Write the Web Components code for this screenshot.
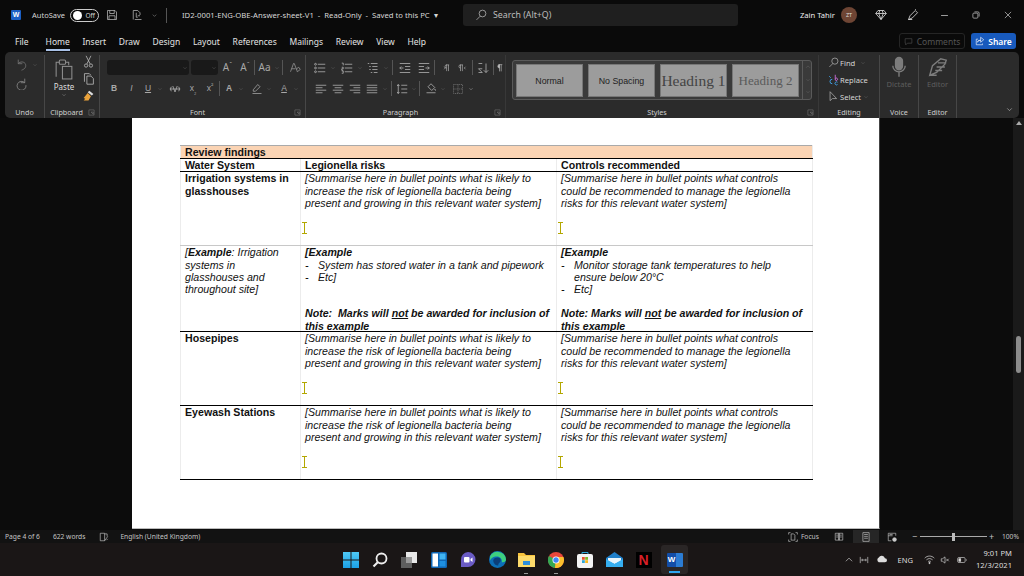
<!DOCTYPE html>
<html lang="en">
<head>
<meta charset="utf-8">
<title>Word</title>
<style>
  html, body { margin: 0; height: 576px; overflow: hidden; background: #0a0a0a; }
  body { display: flex; flex-direction: column; font-family: "Noto Sans", "Open Sans", sans-serif; color: #ddd; }
</style>
</head>
<body>
<word-titlebar></word-titlebar>
<word-tabs></word-tabs>
<word-ribbon></word-ribbon>
<word-document></word-document>
<word-status></word-status>
<win-taskbar></win-taskbar>

<script>
const ICONS = {
  undo: '<path d="M4 2v5h5M4 7c2-3 8-3 9 1s-2 6-5 7"/>',
  redo: '<path d="M12 2v5H7M12 7a5.5 5.5 0 1 0 1.5 3"/>',
  paste: '<path d="M3 18V4h3M12 4h3v3"/><rect x="6" y="2" width="6" height="4" rx="1"/><rect x="9" y="8" width="9" height="12"/>',
  cut: '<circle cx="5" cy="13" r="2"/><circle cx="11" cy="13" r="2"/><path d="M6 11 11 1M10 11 5 1"/>',
  copy: '<path d="M3 12V2h6l2 2"/><path d="M6 5h5l3 3v7H6z"/>',
  painter: '<path d="M9 2l5 4-2 2-5-4z" fill="#ddd" stroke="none"/><path d="M7 5l4 4-3 5-6 0 2-2-2-1z" fill="#e9a23b" stroke="none"/>',
  launcher: '<path d="M2 2h12v12H2zM7 7h5v5M7 7l5 5" stroke-width="1"/>',
  chev: '<path d="M4 6l4 4 4-4"/>',
  bullets: '<circle cx="2" cy="3" r="1.2"/><circle cx="2" cy="8" r="1.2"/><circle cx="2" cy="13" r="1.2"/><path d="M5 3h10M5 8h10M5 13h10"/>',
  numbers: '<path d="M1 1.5h2v3M1 7h2v2H1v2h2M1 12h2v3H1M5 3h10M5 8h10M5 13h10"/>',
  multi: '<path d="M1 2h2M5 2h9M3 6h2M7 6h7M3 10h2M7 10h7M5 14h2M9 14h5"/>',
  indentl: '<path d="M1 2h14M8 6h7M8 10h7M1 14h14M6 8H1M3 6 1 8l2 2"/>',
  indentr: '<path d="M1 2h14M1 6h7M1 10h7M1 14h14M10 8h5M13 6l2 2-2 2"/>',
  ltr: '<path d="M9 3v10M12 3v10M8 3h5M9 3a2.500 2.500 0 0 0 0 5M5 6l2 2-2 2" fill="none"/>',
  rtl: '<path d="M4 3v10M7 3v10M3 3h5M4 3a2.500 2.500 0 0 0 0 5M12 6l-2 2 2 2"/>',
  sort: '<path d="M12 2v12M9 11l3 3 3-3M2 2h5M2 14h5l-5-5h5" stroke-width="1"/>',
  pilcrow: '<path d="M8 2v12M11 2v12M6 2h7M8 2a3 3 0 0 0 0 6z" fill="currentColor" stroke-width="1.2"/>',
  left: '<path d="M1 3h14M1 6.300h9M1 9.600h14M1 13h9"/>',
  center: '<path d="M1 3h14M3.500 6.300h9M1 9.600h14M3.500 13h9"/>',
  right: '<path d="M1 3h14M6 6.300h9M1 9.600h14M6 13h9"/>',
  justify: '<path d="M1 3h14M1 6.300h14M1 9.600h14M1 13h14"/>',
  spacing: '<path d="M7 3h8M7 8h8M7 13h8M3 2v12M1.500 4 3 2l1.500 2M1.500 12 3 14l1.500-2"/>',
  shade: '<path d="M8 1l5 5-4 4-5-5zM2 13h12" /><path d="M13 8l1 2" stroke="#ddd"/>',
  borders: '<path d="M2 2h12v12H2zM8 2v12M2 8h12" stroke-dasharray="1.500 1"/>',
  clear: '<path d="M2 13 6 2h1l3 8M3.500 9h5"/><path d="M10 9l3-2 2 3-4 3z"/>',
  strike: '<path d="M1 8h14M5 4l3 8 3-8M3 5l-1 3 1 3M13 5l1 3-1 3" stroke-width="1"/>',
  search: '<circle cx="10" cy="6" r="4.500"/><path d="M7 9.500 2 14.500"/>',
  replace: '<path d="M7 7a3 3 0 1 0 0 6" stroke="#3fa8f4"/><path d="M3 3l2 2" stroke="#3fa8f4"/><path d="M11 1v7M11 6a1.700 1.700 0 1 1 0 2" stroke="#c86dd7"/><path d="M14 11a2 2 0 1 0 0 3" stroke="#3fa8f4"/>',
  select: '<path d="M3 1v13l3.500-3h6z"/>',
  mic: '<rect x="5.500" y="1" width="5" height="9" rx="2.500" fill="currentColor"/><path d="M3.500 7a4.500 4.500 0 0 0 9 0M8 11.500V15"/>',
  editor: '<path d="M2 14 4 7l6-5 4 1-1 3-6 6zM2 14h5M8 5h6M7 8h6M6 10.500h5"/>',
  diamond: '<path d="M4 2h8l3 4-7 8-7-8zM1 6h14M5 6l3 8 3-8M5 6l1.500-4M11 6 9.500 2"/>',
  pen: '<path d="M2 14l2-5 7-7 3 3-7 7zM2 14h5M11 1l1-1"/>',
  highlight: '<path d="M3 9l6-7 3 3-6 6H3zM2 14h12" />',
  min: '<path d="M3 8h10"/>',
  max: '<rect x="3" y="5" width="8" height="8" rx="1.500"/><path d="M5.500 3H11a2 2 0 0 1 2 2v5.500"/>',
  close: '<path d="M3 3l10 10M13 3 3 13"/>',
  save: '<path d="M2 2h10l2 2v10H2zM5 2v4h6V2M4 14V9h8v5"/>',
  touch: '<path d="M3 14V2h6l3 3v3M5 14h9M7 11h2M7 5v6M9 9h3"/>',
  comment: '<path d="M2 3h12v8H6l-3 3v-3H2z"/>',
  shareup: '<path d="M9 7V2l5 4-5 4V7c-3 0-4 1-5 3 0-3 2-3 5-3zM12 12v2H2V5h3"/>',
  proof: '<path d="M2 2h7v12H2zM9 3h4v4M9 14l5-7M12 13l2-2" />',
  focus: '<path d="M1 4V1h3M12 1h3v3M1 12v3h3M15 12v3h-3M5 3h4l2 2v8H5z"/>',
  read: '<path d="M8 3v10M2 2h6v11H2zM8 2h6v11H8zM3.500 5h3M3.500 8h3M9.500 5h3M9.500 8h3" stroke-width="1"/>',
  print: '<path d="M3 1h10v14H3zM5 4h6M5 7h6M5 10h6"/>',
  web: '<path d="M2 2h12v4M2 2v12h5M2 6h7M4 4h5"/><circle cx="12" cy="12" r="3" fill="currentColor"/>',
  up: '<path d="M3 10l5-5 5 5"/>',
  meet: '<path d="M2 3v10M14 3v10M4 8h8M5 6v4M11 6v4"/>',
  cloud: '<path d="M4 12h9a3 3 0 0 0 0-6 5 5 0 0 0-9-1 4 4 0 0 0 0 7z" fill="currentColor" stroke="none"/>',
  wifi: '<path d="M1 6c4-4 10-4 14 0M3.500 8.500c3-2.500 6-2.500 9 0M6 11c1.500-1 2.500-1 4 0"/><circle cx="8" cy="13" r="1" fill="currentColor"/>',
  mute: '<path d="M2 6h2l4-3v10L4 10H2zM10 6l4 4M14 6l-4 4"/>',
  battery: '<rect x="1" y="4" width="12" height="8" rx="2"/><rect x="3" y="6" width="3" height="4" fill="currentColor"/><path d="M15 7v2"/>'
};

// draws one named stroke icon, centred in a box of width w
class RbIcon extends HTMLElement {
  connectedCallback () {
    const s = this.getAttribute('s') || 12;
    const w = this.getAttribute('w') || s;
    const vb = this.getAttribute('vb') || 16;
    const sw = this.getAttribute('sw') || 1;
    const col = this.getAttribute('c') || '#b9b9b9';
    this.attachShadow({ mode: 'open' }).innerHTML = `
      <style>
        :host { display: flex; align-items: center; justify-content: center; flex: none; width: ${w}px; color: ${col}; }
        svg { display: block; fill: none; stroke: currentColor; }
      </style>
      <svg width="${s}" height="${s}" viewBox="0 0 ${vb} ${vb}" stroke-width="${sw}">${ICONS[this.getAttribute('name')]}</svg>`;
  }
}
customElements.define('rb-icon', RbIcon);

const ic = (name, w, s, extra = '') => `<rb-icon name="${name}" w="${w}" s="${s}" ${extra}></rb-icon>`;
const dn = (w = 8) => ic('chev', w, 6, 'c="#777"');

class WordTitlebar extends HTMLElement {
  connectedCallback () {
    this.attachShadow({ mode: 'open' }).innerHTML = `
      <style>
        :host { display: flex; align-items: center; flex: none; height: 30px; padding-left: 11px; font-size: 7.7px; color: #d6d6d6; position: relative; }
        .logo { flex: none; width: 10px; height: 10px; background: #1b5fc4; border-radius: 1px; color: #fff; font: bold 7px/10px "Liberation Sans", sans-serif; text-align: center; }
        .auto { flex: none; width: 33px; margin-left: 11px; font-size: 7.5px; white-space: nowrap; }
        .toggle { display: flex; align-items: center; justify-content: space-between; flex: none; box-sizing: border-box; width: 29px; height: 13px; margin-left: 5px; padding: 0 3px 0 2px; border: 1px solid #ccc; border-radius: 7px; font-size: 6.5px; }
        .toggle i { width: 9px; height: 9px; border-radius: 50%; background: #fff; }
        .vsep { flex: none; width: 1px; height: 15px; background: #555; margin: 0 15px 0 7px; }
        .title { flex: none; width: 281px; white-space: nowrap; }
        .search { display: flex; align-items: center; gap: 6px; flex: none; box-sizing: border-box; width: 275px; height: 22px; padding-left: 12px; background: #1f1f1f; border-radius: 3px; font-size: 8.8px; color: #bdbdbd; }
        .user { flex: none; width: 41px; margin-left: 62px; font-size: 7.6px; color: #eee; white-space: nowrap; }
        .av { flex: none; width: 16px; height: 16px; border-radius: 50%; background: #6e4534; color: #ddd; font-size: 5.5px; line-height: 16px; text-align: center; margin-right: 16px; }
        .end { display: flex; align-items: center; }
      </style>
      <span class="logo">W</span>
      <span class="auto">AutoSave</span>
      <span class="toggle"><i></i>Off</span>
      ${ic('save', 26, 12)}
      ${ic('touch', 24, 12)}
      ${ic('chev', 10, 7)}
      <span class="vsep"></span>
      <span class="title">ID2-0001-ENG-OBE-Answer-sheet-V1 &nbsp;- &nbsp;Read-Only &nbsp;- &nbsp;Saved to this PC &nbsp;▾</span>
      <span class="search">${ic('search', 12, 12)}Search (Alt+Q)</span>
      <span class="user">Zain Tahir</span>
      <span class="av">ZT</span>
      <span class="end">
        ${ic('diamond', 32, 12, 'c="#eee" style="margin-left:-8px"')}
        ${ic('pen', 32, 12, 'c="#eee"')}
        ${ic('min', 31, 11, 'c="#ddd"')}
        ${ic('max', 32, 10, 'c="#ddd"')}
        ${ic('close', 32, 10, 'c="#ddd"')}
      </span>`;
  }
}
customElements.define('word-titlebar', WordTitlebar);

class WordTabs extends HTMLElement {
  connectedCallback () {
    const names = ['Insert', 'Draw', 'Design', 'Layout', 'References', 'Mailings', 'Review', 'View', 'Help'];
    this.attachShadow({ mode: 'open' }).innerHTML = `
      <style>
        :host { display: flex; align-items: center; flex: none; height: 22px; padding: 0 8px 0 15px; font-size: 8.5px; color: #e4e4e4; }
        span { margin-right: 12.7px; white-space: nowrap; }
        .file { margin-right: 17px; }
        .home { position: relative; }
        .home::after { content: ""; position: absolute; left: 0; right: 0; bottom: -4px; height: 2px; background: #a9c1e6; }
        .side { display: flex; gap: 6px; margin-left: auto; }
        .btn { display: flex; align-items: center; justify-content: center; gap: 3px; box-sizing: border-box; height: 16px; margin: 0; border-radius: 3px; font-size: 8.5px; }
        .comments { width: 66px; border: 1px solid #252525; color: #555; }
        .share { width: 45px; background: #185abd; color: #fff; font-weight: 600; }
      </style>
      <span class="file">File</span>
      <span class="home">Home</span>
      ${names.map(n => `<span>${n}</span>`).join('')}
      <div class="side">
        <div class="btn comments">${ic('comment', 10, 9, 'c="#555"')}Comments</div>
        <div class="btn share">${ic('shareup', 10, 10, 'c="#fff"')}Share</div>
      </div>`;
  }
}
customElements.define('word-tabs', WordTabs);

class WordRibbon extends HTMLElement {
  connectedCallback () {
    const sep = (w = 3) => `<b class="sub" style="width:${w}px"></b>`;
    const sp = w => `<u style="width:${w}px"></u>`;
    const t = (txt, w, cls = '') => `<em class="t ${cls}" style="width:${w}px">${txt}</em>`;
    const launcher = ic('launcher', 10, 7, 'class="lch" c="#8a8a8a"');
    this.attachShadow({ mode: 'open' }).innerHTML = `
      <style>
        :host { display: flex; flex: none; box-sizing: border-box; height: 66px; margin: 0 5px; background: #2b2b2b; border-radius: 5px; font-size: 7.5px; color: #c9c9c9; position: relative; z-index: 1; }
        .g { display: flex; flex-direction: column; flex: none; box-sizing: border-box; height: 63px; margin-top: 3px; border-right: 1px solid #474747; position: relative; }
        .g.soft { border-right-color: #383838; }
        .body { flex: 1; min-height: 0; }
        .lab { flex: none; height: 12px; line-height: 12px; text-align: center; font-size: 7.2px; color: #cfcfcf; }
        .lch { position: absolute; right: 3px; bottom: 2px; }
        .rows { display: flex; flex-direction: column; gap: 6px; padding-top: 5px; }
        .row { display: flex; align-items: center; height: 15px; }
        u { display: block; flex: none; }
        .sub { display: block; flex: none; height: 15px; box-sizing: border-box; border-left: 1px solid #555; margin-left: 1px; }
        .t { display: block; flex: none; font-style: normal; text-align: center; color: #a8a8a8; font-size: 10px; line-height: 15px; white-space: nowrap; }
        .t sup { font-size: 7px; line-height: 0; }
        .t sub { font-size: 6px; line-height: 0; }
        .t.s { font-family: "Liberation Sans", sans-serif; font-size: 8.5px; }
        .t.b { font-weight: bold; }
        .combo { flex: none; box-sizing: border-box; height: 15px; background: #191919; border-radius: 3px; display: flex; align-items: center; justify-content: flex-end; }
        .paste { display: grid; grid-template-columns: 34px 15px; padding-left: 2px; }
        .paste .col1 { display: flex; flex-direction: column; align-items: center; padding-top: 3px; font-size: 8px; color: #ddd; }
        .paste .col2 { display: flex; flex-direction: column; gap: 4px; }
        .gal { display: flex; box-sizing: border-box; width: 300px; height: 40px; margin: 5px 0 0 6px; padding: 3px 0 0 3px; gap: 5px; border: 1px solid #5a5a5a; border-radius: 3px; background: #3a3a3a; }
        .sty { flex: none; box-sizing: border-box; width: 67px; height: 33px; background: #9c9c9c; border: 1px solid #777; color: #222; display: flex; align-items: center; justify-content: center; font: 8.8px "Liberation Sans", sans-serif; white-space: nowrap; }
        .sty.h { font: 15.5px "Liberation Serif", serif; color: #444; }
        .sty.h2 { font: 13px "Liberation Serif", serif; color: #5a5a5a; }
        .spin { display: flex; flex-direction: column; width: 10px; margin: -3px 0 0 -2px; border-left: 1px solid #5a5a5a; }
        .spin rb-icon { height: 12.600px; }
        .edit { display: flex; flex-direction: column; gap: 4px; padding: 1px 0 0 8px; font-size: 7.6px; color: #d6d6d6; }
        .edit div { display: flex; align-items: center; gap: 1px; height: 13px; }
        .big { display: flex; flex-direction: column; align-items: center; padding-top: 1px; font-size: 7.5px; color: #5e5e5e; }
      </style>

      <div class="g" style="width:40px">
        <div class="body rows" style="gap:2px;padding-top:1px">
          <div class="row" style="height:17px">${sp(5)}${ic('undo', 22, 13, 'c="#777"')}${dn(6)}</div>
          <div class="row" style="height:17px">${sp(5)}${ic('redo', 22, 13, 'c="#8a8a8a"')}</div>
        </div>
        <div class="lab">Undo</div>
      </div>

      <div class="g" style="width:55px">
        <div class="body paste">
          <div class="col1">${ic('paste', 34, 22, 'vb="21" c="#8f8f8f"')}<span style="margin-top:1px">Paste</span>${ic('chev', 12, 6)}</div>
          <div class="col2">${ic('cut', 15, 13)}${ic('copy', 15, 13)}${ic('painter', 15, 13)}</div>
        </div>
        <div class="lab" style="padding-right:11px">Clipboard</div>${launcher}
      </div>

      <div class="g" style="width:206px">
        <div class="body rows">
          <div class="row">${sp(7)}
            <div class="combo" style="width:82px">${dn()}</div>${sp(2)}
            <div class="combo" style="width:27px">${dn()}</div>
            ${t('A<sup>ˆ</sup>', 19)}${t('A<sup>ˇ</sup>', 16)}${sep(2)}${t('Aa', 17)}${dn()}${sep(6)}${ic('clear', 14, 12, 'c="#999"')}
          </div>
          <div class="row">${sp(5)}
            ${t('B', 18, 's b')}${t('<i>I</i>', 17, 's')}${t('<span style="text-decoration:underline">U</span>', 16, 's')}${dn()}${sp(2)}
            ${ic('strike', 18, 12)}${t('x<sub>₂</sub>', 18, 's')}${t('x<sup>²</sup>', 16, 's')}${sep(2)}
            ${t('A', 16, 's b')}${dn()}${sp(4)}
            ${ic('highlight', 16, 12, 'c="#aaa"')}${dn()}${sp(3)}
            ${t('<span style="text-decoration:underline">A</span>', 16, 's')}${dn()}
          </div>
        </div>
        <div class="lab" style="padding-right:10px">Font</div>${launcher}
      </div>

      <div class="g soft" style="width:200px">
        <div class="body rows">
          <div class="row">${sp(6)}
            ${ic('bullets', 16, 12)}${dn(10)}${sp(1)}${ic('numbers', 16, 12)}${dn(10)}${ic('multi', 16, 12)}${dn(10)}${sep(3)}
            ${ic('indentl', 20, 12)}${ic('indentr', 18, 12)}${sep(3)}
            ${ic('ltr', 17, 10)}${ic('rtl', 17, 10)}${sep(1)}${ic('sort', 19, 12)}${sep(2)}${ic('pilcrow', 9, 12)}
          </div>
          <div class="row">${sp(6)}
            ${ic('left', 17, 12)}${ic('center', 17, 12)}${ic('right', 17, 12)}${ic('justify', 17, 12)}${dn(10)}${sep(2)}
            ${ic('spacing', 17, 12)}${dn(8)}${sep(4)}${ic('shade', 15, 12)}${dn(10)}${sp(3)}${ic('borders', 14, 12, 'c="#777"')}${ic('chev', 12, 6, 'c="#ddd"')}
          </div>
        </div>
        <div class="lab" style="padding-right:10px">Paragraph</div>${launcher}
      </div>

      <div class="g soft" style="width:313px">
        <div class="body">
          <div class="gal">
            <div class="sty">Normal</div>
            <div class="sty">No Spacing</div>
            <div class="sty h">Heading 1</div>
            <div class="sty h2">Heading 2</div>
            <div class="spin">${ic('up', 9, 6, 'c="#777"')}${ic('chev', 9, 6, 'c="#777"')}${ic('chev', 9, 6, 'c="#777"')}</div>
          </div>
        </div>
        <div class="lab" style="padding-right:10px">Styles</div>${launcher}
      </div>

      <div class="g" style="width:61px">
        <div class="body edit">
          <div>${ic('search', 12, 11)}Find ${dn(13)}</div>
          <div>${ic('replace', 12, 12, 'sw="1.200"')}Replace</div>
          <div>${ic('select', 12, 11)}Select ${dn(8)}</div>
        </div>
        <div class="lab">Editing</div>
      </div>

      <div class="g" style="width:39px">
        <div class="body big">${ic('mic', 39, 22, 'c="#7d7d7d"')}<span style="margin-top:1px">Dictate</span></div>
        <div class="lab">Voice</div>
      </div>

      <div class="g" style="width:38px">
        <div class="body big">${ic('editor', 38, 22, 'c="#7d7d7d"')}<span style="margin-top:1px">Editor</span></div>
        <div class="lab">Editor</div>
      </div>

      <div style="flex:1;display:flex;align-items:flex-end;justify-content:flex-end;padding:0 5px 4px 0">${ic('chev', 10, 9, 'c="#ccc"')}</div>`;
  }
}
customElements.define('word-ribbon', WordRibbon);

class WordDocument extends HTMLElement {
  connectedCallback () {
    const cursor = `<svg class="ib" width="6" height="12" viewBox="0 0 6 12"><path d="M0 .5h5M0 11.500h5M2.500 .5v11" fill="none" stroke="#b3a700"/></svg>`;
    const risks = `<i>[Summarise here in bullet points what is likely to<br>increase the risk of legionella bacteria being<br>present and growing in this relevant water system]</i>`;
    const ctrl = `<i>[Summarise here in bullet points what controls<br>could be recommended to manage the legionella<br>risks for this relevant water system]</i>`;
    const blank = `<p class="cur">${cursor}</p>`;
    const note = `<div class="note"><b><i>Note: &nbsp;Marks will <u>not</u> be awarded for inclusion of this example</i></b></div>`;
    const note2 = `<div class="note"><b><i>Note: Marks will <u>not</u> be awarded for inclusion of this example</i></b></div>`;
    this.attachShadow({ mode: 'open' }).innerHTML = `
      <style>
        :host { display: flex; flex: 1; min-height: 0; background: #0c0c0c; }
        .page { flex: none; box-sizing: border-box; width: 748px; margin: 0 0 1px 132px; padding: 27px 0 0 48px; background: #fff; border-bottom: 1px solid #bbb; border-right: 1px solid #444; overflow: hidden; }
        table { border-collapse: collapse; table-layout: fixed; width: 632px; font: 10.62px/12.2px "Liberation Sans", sans-serif; color: #111; }
        td { padding: 0 3px 0 4px; vertical-align: top; border-left: 1px solid #ececec; border-right: 1px solid #ececec; overflow: hidden; }
        tr.top td { border-top: 1px solid #aaa; border-bottom: 1px solid #000; background: #fbd4b4; }
        tr.dark td { border-bottom: 1px solid #000; }
        tr.soft td { border-bottom: 1px solid #c8c8c8; }
        td.h { font-weight: bold; }
        p { margin: 0; }
        .cur { margin: 13px 0 0 -3px; height: 12px; }
        .ib { display: block; }
        .dash { display: grid; grid-template-columns: 13px 1fr; }
        .gap { height: 24.400px; }
        .gap1 { height: 12.200px; }
        .note { margin-bottom: -2px; }
        .scroll { flex: none; width: 11px; margin-left: auto; background: #1a1a1a; display: flex; flex-direction: column; align-items: center; padding-top: 3px; box-sizing: border-box; }
        .thumb { width: 5px; height: 37px; margin-top: 211px; background: #8c8c8c; border-radius: 3px; }
        .arr { width: 0; height: 0; border: 3px solid transparent; border-top: 0; border-bottom: 4px solid #aaa; }
      </style>
      <div class="page">
        <table>
          <colgroup><col style="width:120px"><col style="width:256px"><col style="width:256px"></colgroup>
          <tr class="top" style="height:13px"><td colspan="3" class="h">Review findings</td></tr>
          <tr class="dark" style="height:13px"><td class="h">Water System</td><td class="h">Legionella risks</td><td class="h">Controls recommended</td></tr>
          <tr class="soft" style="height:74px"><td class="h">Irrigation systems in glasshouses</td><td>${risks}${blank}</td><td>${ctrl}${blank}</td></tr>
          <tr class="dark" style="height:86px">
            <td><i>[<b>Example</b>: Irrigation systems in glasshouses and throughout site]</i></td>
            <td><b><i>[Example</i></b>
              <div class="dash"><i>-</i><i>System has stored water in a tank and pipework</i><i>-</i><i>Etc]</i></div>
              <div class="gap"></div>${note}</td>
            <td><b><i>[Example</i></b>
              <div class="dash"><i>-</i><i>Monitor storage tank temperatures to help<br>ensure below 20°C</i><i>-</i><i>Etc]</i></div>
              <div class="gap1"></div>${note2}</td>
          </tr>
          <tr class="dark" style="height:74px"><td class="h">Hosepipes</td><td>${risks}${blank}</td><td>${ctrl}${blank}</td></tr>
          <tr class="dark" style="height:74px"><td class="h">Eyewash Stations</td><td>${risks}${blank}</td><td>${ctrl}${blank}</td></tr>
        </table>
      </div>
      <div class="scroll"><div class="arr"></div><div class="thumb"></div></div>`;
  }
}
customElements.define('word-document', WordDocument);

class WordStatus extends HTMLElement {
  connectedCallback () {
    this.attachShadow({ mode: 'open' }).innerHTML = `
      <style>
        :host { display: flex; align-items: center; flex: none; height: 13px; padding: 0 5px; background: #121212; font-size: 6.700px; color: #c4c4c4; white-space: nowrap; }
        .w { margin-left: 13px; }
        .right { display: flex; align-items: center; margin-left: auto; height: 13px; }
        .on { display: flex; align-items: center; justify-content: center; width: 26px; height: 13px; background: #262626; }
        .slider { display: flex; align-items: center; width: 67px; height: 1px; margin-left: 1px; background: #aaa; }
        .slider i { width: 3px; height: 8px; margin-left: 32px; background: #bbb; }
        .pm { font-size: 9px; width: 9px; text-align: center; }
      </style>
      <span>Page 4 of 6</span><span class="w">622 words</span>
      ${ic('proof', 30, 10, 'c="#ccc" style="margin-left:4px"')}
      <span style="margin-left:1px">English (United Kingdom)</span>
      <div class="right">
        ${ic('focus', 12, 10, 'c="#ccc"')}<span style="margin:0 13px 0 2px">Focus</span>
        ${ic('read', 14, 10, 'c="#ccc" style="margin-right:7px"')}
        <div class="on">${ic('print', 12, 10, 'c="#ccc"')}</div>
        ${ic('web', 26, 10, 'c="#ccc"')}
        <span class="pm" style="margin-left:5px">−</span><div class="slider"><i></i></div><span class="pm">+</span>
        <span style="margin-left:6px">100%</span>
      </div>`;
  }
}
customElements.define('word-status', WordStatus);

class WinTaskbar extends HTMLElement {
  connectedCallback () {
    const win = `<svg width="16" height="16" viewBox="0 0 16 16"><defs><linearGradient id="w" x1="0" y1="0" x2="0" y2="1"><stop offset="0" stop-color="#4fc9f5"/><stop offset="1" stop-color="#1ba0e6"/></linearGradient></defs><path d="M0 0h7.500v7.500H0zM8.500 0H16v7.500H8.500zM0 8.500h7.500V16H0zM8.500 8.500H16V16H8.500z" fill="url(#w)"/></svg>`;
    const srch = `<svg width="16" height="16" viewBox="0 0 16 16" fill="none" stroke="#eee" stroke-width="1.800"><circle cx="9.500" cy="6.500" r="5"/><path d="M6 10 1.500 14.500" stroke-width="2.200"/></svg>`;
    const view = `<svg width="16" height="16" viewBox="0 0 16 16"><rect x="0" y="5" width="11" height="11" fill="#5e5e5e"/><rect x="5" y="0" width="11" height="11" fill="#e8e8e8"/><rect x="5" y="5" width="6" height="6" fill="#9a9a9a"/></svg>`;
    const widgets = `<svg width="16" height="16" viewBox="0 0 16 16"><rect width="16" height="16" rx="1.500" fill="#0f66b5"/><rect x="1.500" y="1.500" width="5.500" height="13" fill="#fff"/><rect x="8.500" y="1.500" width="6" height="6" fill="#41b4f2"/><rect x="8.500" y="9" width="6" height="5.500" fill="#1e8fe0"/></svg>`;
    const chat = `<svg width="16" height="16" viewBox="0 0 16 16"><path d="M8 0a7.500 7.500 0 0 1 0 15H1v-7A7.500 7.500 0 0 1 8 0z" fill="#6a5bc4"/><rect x="4" y="5" width="5.500" height="5.500" rx="1" fill="#fff"/><path d="M10.500 7l2-1.500v4.500l-2-1.500z" fill="#fff"/></svg>`;
    const edge = `<svg width="17" height="17" viewBox="0 0 16 16"><circle cx="8" cy="8" r="8" fill="#0c6fb8"/><path d="M1 5a8 8 0 0 1 15 3c0 2-2 3-4 2.500C13 7 9 4 5 5.500 3.500 6 2 7 1 9z" fill="#3ed07f"/><path d="M4 9c0-2 2-3 4-3s3 1 3 3-3 2.500-2 4.500c-3 .5-5-2-5-4.500z" fill="#0b3f7a"/></svg>`;
    const folder = `<svg width="17" height="15" viewBox="0 0 17 15"><path d="M0 1h6l2 2h9v12H0z" fill="#f8c33c"/><path d="M0 4h17v11H0z" fill="#fddb6b"/><rect x="5" y="9" width="7" height="4" fill="#2e8fdc"/></svg>`;
    const chrome = `<svg width="16" height="16" viewBox="0 0 16 16"><circle cx="8" cy="8" r="8" fill="#e8463a"/><path d="M8 8 1 4a8 8 0 0 0 6 12z" fill="#34a853"/><path d="M8 5h7.400A8 8 0 0 1 7 16z" fill="#fbc02d"/><circle cx="8" cy="8" r="3.500" fill="#fff"/><circle cx="8" cy="8" r="2.700" fill="#4285f4"/></svg>`;
    const store = `<svg width="16" height="17" viewBox="0 0 16 17"><path d="M5 3V1.500h6V3" fill="none" stroke="#2ea6d8"/><rect y="3" width="16" height="14" rx="2" fill="#f4f4f4"/><rect x="5" y="6" width="2.800" height="2.800" fill="#e8522f"/><rect x="8.200" y="6" width="2.800" height="2.800" fill="#7db928"/><rect x="5" y="9.200" width="2.800" height="2.800" fill="#2ea6d8"/><rect x="8.200" y="9.200" width="2.800" height="2.800" fill="#fbb81c"/></svg>`;
    const mail = `<svg width="17" height="15" viewBox="0 0 17 15"><path d="M0 6 8.500 0 17 6v9H0z" fill="#1f7fc9"/><path d="M2 6h13v3l-6.500 3L2 9z" fill="#e9f5fc"/><path d="M0 7l8.500 5L17 7v8H0z" fill="#35aef0"/></svg>`;
    const items = [win, srch, view, widgets, chat, edge, folder, chrome, store, mail];
    this.attachShadow({ mode: 'open' }).innerHTML = `
      <style>
        :host { display: flex; align-items: center; flex: none; height: 33px; background: #1a1616; position: relative; }
        .apps { display: flex; align-items: center; height: 33px; margin-left: 336px; }
        .app { display: flex; align-items: center; justify-content: center; width: 29.300px; height: 33px; position: relative; }
        .dot::after { content: ""; position: absolute; bottom: 2px; width: 4px; height: 1.500px; background: #999; }
        .nf { width: 16px; height: 16px; background: #000; color: #d81f26; font: bold 14px/16px "Liberation Sans", sans-serif; text-align: center; }
        .wd { background: #2a2626; border-radius: 3px; width: 27px; height: 29px; margin-left: 3px; }
        .wd::after { content: ""; position: absolute; bottom: 1px; left: 8px; width: 11px; height: 2px; background: #2ea6f0; }
        .wi { width: 16px; height: 14px; box-sizing: border-box; padding-left: 1px; background: linear-gradient(90deg, #134ea8 0 55%, #2b7cd3 55%); color: #fff; font: bold 8px/14px "Liberation Sans", sans-serif; border-radius: 1px; }
        .tray { display: flex; align-items: center; margin-left: auto; padding-right: 4px; font-size: 7.6px; color: #ddd; }
        .clock { box-sizing: border-box; width: 50px; padding-right: 8px; text-align: right; line-height: 11.500px; font-size: 7.6px; color: #ddd; }
      </style>
      <div class="apps">
        ${items.map((s, i) => `<div class="app ${i === 6 || i === 7 ? 'dot' : ''}">${s}</div>`).join('')}
        <div class="app"><div class="nf">N</div></div>
        <div class="app wd"><div class="wi">W</div></div>
      </div>
      <div class="tray">
        ${ic('up', 12, 10, 'c="#ddd"')}
        ${ic('meet', 18, 10, 'c="#ddd"')}
        ${ic('cloud', 16, 11, 'c="#ddd"')}
        <span style="margin:0 11px 0 8px">ENG</span>
        ${ic('wifi', 11, 11, 'c="#ddd"')}
        ${ic('mute', 20, 10, 'c="#ddd"')}
        ${ic('battery', 13, 10, 'c="#ddd"')}
        <div class="clock" style="margin-left:2px">9:01 PM<br>12/3/2021</div>
      </div>`;
  }
}
customElements.define('win-taskbar', WinTaskbar);
</script>
</body>
</html>
